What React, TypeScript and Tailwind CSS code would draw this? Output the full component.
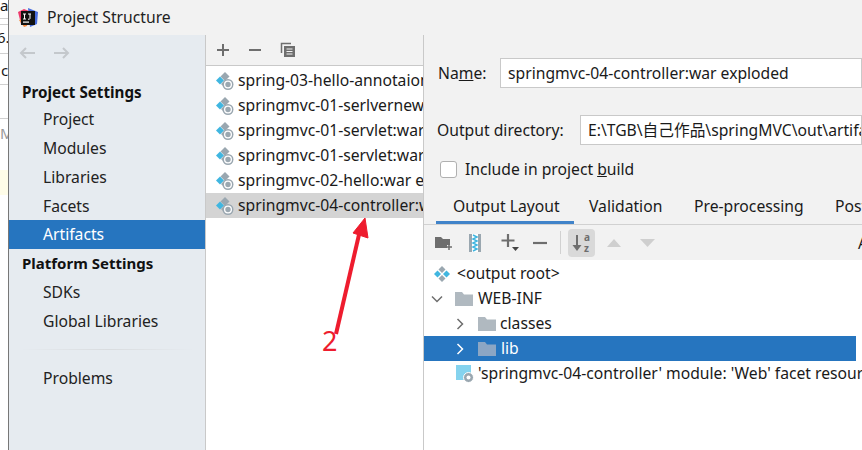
const font = { fontFamily: '"Noto Sans", "Noto Sans CJK SC", sans-serif' };

function Artifact() {
  return (
    <svg width="18" height="18" viewBox="0 0 18 18" className="shrink-0">
      <path d="M9 0l4.500 4.500L9 9 4.500 4.500z" fill="#9aa7b0" />
      <path d="M4 4.500L8 8.500 4 12.500 0 8.500z" fill="#40b6e0" />
      <path d="M8 9l3 3-3 3-3-3z" fill="#9aa7b0" />
      <circle cx="12" cy="12.500" r="5.500" fill="#9aa7b0" />
      <circle cx="12" cy="12.500" r="4" fill="#fff" />
      <circle cx="12" cy="12.500" r="2.700" fill="#9aa7b0" />
    </svg>
  );
}

function Root() {
  return (
    <svg width="18" height="18" viewBox="0 0 18 18" className="shrink-0">
      <path d="M9 1l3.500 3.500L9 8 5.500 4.500z" fill="#9aa7b0" />
      <path d="M4.500 5.500L8 9l-3.500 3.500L1 9z" fill="#40b6e0" />
      <path d="M13.500 5.500L17 9l-3.500 3.500L10 9z" fill="#40b6e0" />
      <path d="M9 10l3.500 3.500L9 17l-3.500-3.500z" fill="#9aa7b0" />
    </svg>
  );
}

function Folder({ color = "#b0b9c0" }: { color?: string }) {
  return (
    <svg width="18" height="14" viewBox="0 0 18 14" className="shrink-0">
      <path d="M0 0h7l2 2.500h9V14H0z" fill={color} />
    </svg>
  );
}

function Chevron({ open, color = "#6e6e6e" }: { open?: boolean; color?: string }) {
  return (
    <svg width="12" height="12" viewBox="0 0 12 12" className="shrink-0">
      <path d={open ? "M1 3.500l5 5 5-5" : "M3.500 1l5 5-5 5"} fill="none" stroke={color} strokeWidth="1.500" />
    </svg>
  );
}

const settings = ["Project", "Modules", "Libraries", "Facets", "Artifacts"];
const artifacts = [
  "spring-03-hello-annotaion",
  "springmvc-01-serlvernew",
  "springmvc-01-servlet:war",
  "springmvc-01-servlet:war",
  "springmvc-02-hello:war e",
  "springmvc-04-controller:war",
];

export default function App() {
  return (
    <div style={font} className="relative w-[862px] h-[450px] overflow-hidden flex bg-white text-[15.7px] text-[#1a1a1a]">
      <div className="w-[9px] shrink-0 border-r border-[#777777] bg-white flex flex-col text-[15px] overflow-hidden whitespace-nowrap">
        <div className="h-[18px] leading-[10px]">al</div>
        <div className="h-[1px] shrink-0 bg-[#d0d0d0]" />
        <div className="h-[1px] shrink-0 mt-[5px] bg-[#d0d0d0]" />
        <div className="mt-[3px] h-[18px] shrink-0 leading-[18px] -ml-[3px]">6.</div>
        <div className="h-[1px] shrink-0 mt-[7px] bg-[#d0d0d0]" />
        <div className="mt-[7px] h-[18px] shrink-0 leading-[18px] pl-[1px]">c</div>
        <div className="h-[1px] shrink-0 mt-[5px] bg-[#d0d0d0]" />
        <div className="h-[1px] shrink-0 mt-[33px] bg-[#d0d0d0]" />
        <div className="mt-[5px] h-[18px] shrink-0 leading-[18px] text-[#999]">M</div>
        <div className="h-[25px] shrink-0 mt-[28px] bg-[#fffde8]" />
      </div>

      <div className="flex-1 flex flex-col min-w-0">
        <div className="h-[35px] shrink-0 bg-[#f2f2f2] flex items-center pl-[9px] gap-[9px]">
          <svg width="20" height="20" viewBox="0 0 20 20" className="shrink-0">
            <path d="M0 4l6-3 5 2-2 15-6-2z" fill="#ee3a6c" />
            <path d="M1 12l5 7 3-1-2-8z" fill="#f58a3c" />
            <path d="M10 0l10 4-1 12-7 3z" fill="#4a6ee0" />
            <rect x="3" y="3" width="14" height="14" fill="#111" />
            <rect x="5" y="13.500" width="6" height="1.200" fill="#fff" />
            <path d="M5 6h3M6.500 6v5M5 11h3M10 6h3M12 6v4.500q0 1-2 .7" fill="none" stroke="#fff" strokeWidth="1" />
          </svg>
          <span className="leading-none text-[#222]">Project Structure</span>
        </div>

        <div className="flex-1 flex min-h-0">
          <div className="w-[197px] shrink-0 bg-[#e6ebf0] border-r border-[#c9c9c9] flex flex-col">
            <div className="h-[36px] shrink-0 flex items-center pl-[10px] gap-[14px]">
              <svg width="19" height="14" viewBox="0 0 19 14"><path d="M16 7H2M7 2L2 7l5 5" fill="none" stroke="#c4c8cc" strokeWidth="2" /></svg>
              <svg width="19" height="14" viewBox="0 0 19 14"><path d="M2 7h14M11 2l5 5-5 5" fill="none" stroke="#c4c8cc" strokeWidth="2" /></svg>
            </div>
            <div className="pl-[13px] h-[25px] mt-[9px] flex items-center font-bold text-[15.2px] text-[#111]">Project Settings</div>
            {settings.map((s) => (
              <div
                key={s}
                className={`flex items-center pl-[34px] ${s === "Facets" ? "h-[28px] pt-[1px]" : "h-[29px]"} ${s === "Artifacts" ? "bg-[#2675bf] text-white" : "text-[#222]"}`}
              >
                {s}
              </div>
            ))}
            <div className="pl-[13px] h-[29px] flex items-center font-bold text-[15px] text-[#111]">Platform Settings</div>
            {["SDKs", "Global Libraries"].map((s) => (
              <div key={s} className="h-[29px] flex items-center pl-[34px] text-[#222]">{s}</div>
            ))}
            <div className="h-[1px] mx-[11px] mt-[13px] bg-linear-to-r from-transparent via-[#d9dcdf] to-transparent" />
            <div className="h-[29px] flex items-center pl-[34px] mt-[14px] text-[#222]">Problems</div>
          </div>

          <div className="w-[218px] shrink-0 border-r border-[#c9c9c9] flex flex-col bg-white overflow-hidden">
            <div className="h-[31px] shrink-0 bg-[#f2f2f2] border-b border-[#c9c9c9] flex items-center pl-[10px] gap-[18px]">
              <svg width="14" height="14" viewBox="0 0 14 14"><path d="M7 1v12M1 7h12" stroke="#6e6e6e" strokeWidth="2" /></svg>
              <svg width="14" height="14" viewBox="0 0 14 14"><path d="M1 7h12" stroke="#6e6e6e" strokeWidth="2" /></svg>
              <svg width="16" height="16" viewBox="0 0 16 16">
                <path d="M1.500 11V1.500H11" fill="none" stroke="#6e6e6e" strokeWidth="1.500" />
                <rect x="4" y="4" width="11" height="11" fill="#6e6e6e" />
                <path d="M6.500 7h6M6.500 9.500h6M6.500 12h6" stroke="#f2f2f2" />
              </svg>
            </div>
            <div className="pt-[2px]">
              {artifacts.map((a, i) => (
                <div
                  key={i}
                  className={`h-[25px] flex items-center pl-[10px] gap-[4px] whitespace-nowrap ${i === 5 ? "bg-[#d4d4d4]" : ""}`}
                >
                  <Artifact />
                  <span>{a}</span>
                </div>
              ))}
            </div>
          </div>

          <div className="flex-1 min-w-0 bg-[#f2f2f2] flex flex-col overflow-hidden">
            <div className="flex items-center h-[30px] mt-[23px] pl-[14px] whitespace-nowrap">
              <span className="w-[62px] pt-[1px]">Na<span className="underline">m</span>e:</span>
              <div className="flex-1 h-[30px] bg-white border border-[#c9c9c9] flex items-center pl-[7px] pt-[1px]">springmvc-04-controller:war exploded</div>
            </div>
            <div className="flex items-center h-[30px] mt-[27px] pl-[13px] whitespace-nowrap">
              <span className="w-[143px] shrink-0 pt-[1px]">Output directory:</span>
              <div className="flex-1 h-[30px] bg-white border border-[#c9c9c9] flex items-center pl-[7px] pt-[1px] overflow-hidden">E:\TGB\自己作品\springMVC\out\artifacts</div>
            </div>
            <div className="flex items-center h-[24px] mt-[12px] pl-[16px] gap-[8px]">
              <div className="w-[17px] h-[17px] bg-white border border-[#b0b0b0] rounded-[3px]" />
              <span className="pt-[2px]">Include in project <span className="underline">b</span>uild</span>
            </div>
            <div className="h-[36px] mt-[8px] shrink-0 border-b border-[#d1d1d1] flex whitespace-nowrap overflow-hidden">
              <div className="relative shrink-0 w-[138px] ml-[12px] pl-[17px] flex items-center">
                Output Layout
                <div className="absolute left-0 right-0 bottom-0 h-[3px] bg-[#4083c9]" />
              </div>
              <div className="shrink-0 w-[105px] pl-[15px] flex items-center">Validation</div>
              <div className="shrink-0 w-[141px] pl-[15px] flex items-center">Pre-processing</div>
              <div className="shrink-0 pl-[15px] flex items-center">Post</div>
            </div>
            <div className="h-[35px] shrink-0 flex items-center relative">
              <svg className="ml-[11px] shrink-0" width="18" height="16" viewBox="0 0 18 16">
                <path d="M0 2h6l2 2h7v6h-3v3H0z" fill="#6e6e6e" />
                <path d="M14 9v6M11 12h6" stroke="#6e6e6e" strokeWidth="1.500" />
              </svg>
              <svg className="ml-[16px] shrink-0" width="12" height="18" viewBox="0 0 12 18">
                <rect width="12" height="18" fill="#9aa7b0" />
                <rect x="3" width="6" height="18" fill="#ffffff" />
                <path d="M4 1l4 2-4 2 4 2-4 2 4 2-4 2 4 2-4 2" fill="none" stroke="#40b6e0" strokeWidth="1.500" />
              </svg>
              <svg className="ml-[20px] shrink-0" width="19" height="17" viewBox="0 0 19 17">
                <path d="M7 0v13M0.500 6.500h13" stroke="#6e6e6e" strokeWidth="2.200" />
                <path d="M11 13h7l-3.500 4z" fill="#444" />
              </svg>
              <svg className="ml-[13px] shrink-0" width="14" height="4" viewBox="0 0 14 4"><path d="M0 2h14" stroke="#6e6e6e" strokeWidth="2.200" /></svg>
              <div className="w-[1px] h-[23px] shrink-0 bg-[#d1d1d1] ml-[13px]" />
              <div className="w-[27px] h-[28px] shrink-0 ml-[7px] bg-[#d9d9d9] rounded-[4px] flex items-center justify-center text-[#6e6e6e]">
                <svg width="23" height="22" viewBox="0 0 23 22">
                  <path d="M7 3v13" fill="none" stroke="#6e6e6e" strokeWidth="2" />
                  <path d="M2.500 13h9L7 19z" fill="#6e6e6e" />
                  <text x="14" y="9" fontSize="10" fontWeight="700" fill="#6e6e6e">a</text>
                  <text x="14" y="20" fontSize="10" fontWeight="700" fill="#6e6e6e">z</text>
                </svg>
              </div>
              <svg className="ml-[12px] shrink-0" width="14" height="8" viewBox="0 0 14 8"><path d="M0 8L7 0l7 8z" fill="#cfcfcf" /></svg>
              <svg className="ml-[19px] shrink-0" width="15" height="8" viewBox="0 0 15 8"><path d="M0 0l7.500 8L15 0z" fill="#cfcfcf" /></svg>
              <span className="absolute right-[-6px] top-[7px]">A</span>
            </div>
            <div className="flex-1 bg-white pt-[1px] whitespace-nowrap">
              <div className="h-[25px] flex items-center pl-[9px] gap-[6px]"><Root /><span>&lt;output root&gt;</span></div>
              <div className="h-[25px] flex items-center pl-[7px]"><Chevron open /><span className="ml-[12px]"><Folder /></span><span className="ml-[5px]">WEB-INF</span></div>
              <div className="h-[25px] flex items-center pl-[30px]"><Chevron /><span className="ml-[12px]"><Folder /></span><span className="ml-[4px]">classes</span></div>
              <div className="h-[25px] flex items-center pl-[30px] bg-[#2675bf] text-white w-[432px]"><Chevron color="#fff" /><span className="ml-[12px]"><Folder color="#8ca6c4" /></span><span className="ml-[5px]">lib</span></div>
              <div className="h-[25px] flex items-center pl-[32px] gap-[4px]">
                <svg width="18" height="18" viewBox="0 0 18 18" className="shrink-0">
                  <rect width="15" height="15" fill="#85d3ee" />
                  <circle cx="12.500" cy="12.500" r="5" fill="#9aa7b0" stroke="#fff" />
                  <circle cx="12.500" cy="12.500" r="2" fill="#fff" />
                </svg>
                <span>'springmvc-04-controller' module: 'Web' facet resources</span>
              </div>
            </div>
          </div>
        </div>
      </div>

      <svg className="absolute left-0 top-0 pointer-events-none" width="862" height="450" viewBox="0 0 862 450">
        <path d="M336 334L361 226" stroke="#ee1c2e" strokeWidth="4" fill="none" />
        <path d="M365 218L353 233 368 238z" fill="#ee1c2e" stroke="#ee1c2e" />
      </svg>
      <span className="absolute left-[322px] top-[322px] text-[#ee1c2e] text-[27px] leading-[38px]">2</span>
    </div>
  );
}
